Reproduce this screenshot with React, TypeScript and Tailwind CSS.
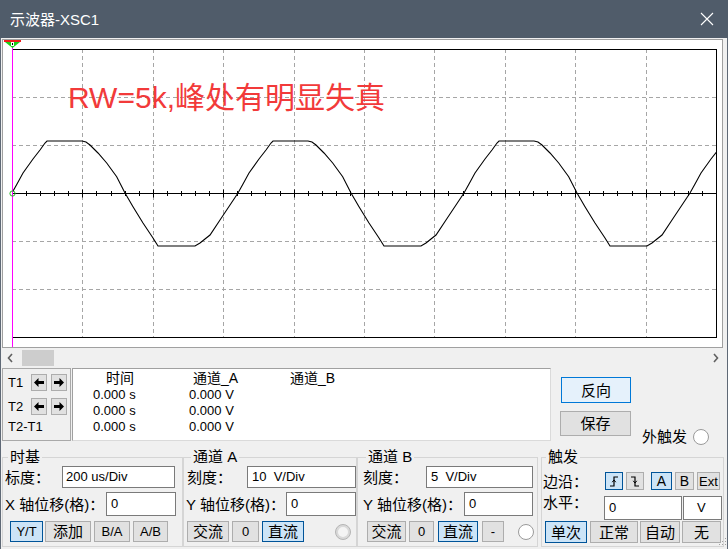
import React from "react";

function Btn({ cls, sel, children }: { cls: string; sel?: boolean; children: React.ReactNode }) {
  return (
    <div
      className={`flex items-center justify-center border text-black leading-none ${
        sel ? "bg-[#cce4f7] border-[#005499]" : "bg-[#e1e1e1] border-[#adadad]"
      } ${cls}`}
    >
      {children}
    </div>
  );
}

function Field({ cls, children }: { cls: string; children: React.ReactNode }) {
  return (
    <div
      className={`flex items-center bg-white border border-[#7a7a7a] text-[13px] text-black whitespace-pre ${cls}`}
    >
      {children}
    </div>
  );
}

function ArrowIcon({ dir }: { dir: "l" | "r" }) {
  return (
    <svg width="10" height="9" viewBox="0 0 10 9">
      {dir === "l" ? (
        <polygon points="0,4.5 4.5,0 4.5,3 10,3 10,6 4.5,6 4.5,9" fill="#000" />
      ) : (
        <polygon points="10,4.5 5.5,0 5.5,3 0,3 0,6 5.5,6 5.5,9" fill="#000" />
      )}
    </svg>
  );
}

function EdgeIcon({ rising }: { rising: boolean }) {
  return (
    <svg width="10" height="11" viewBox="0 0 10 11">
      {rising ? (
        <>
          <path d="M1 10 H5 V1 H9" stroke="#000" strokeWidth="1.2" fill="none" />
          <path d="M3.2 6.2 L5 4 L6.8 6.2" stroke="#000" strokeWidth="1" fill="none" />
        </>
      ) : (
        <>
          <path d="M1 1 H5 V10 H9" stroke="#000" strokeWidth="1.2" fill="none" />
          <path d="M3.2 4.8 L5 7 L6.8 4.8" stroke="#000" strokeWidth="1" fill="none" />
        </>
      )}
    </svg>
  );
}

const BASE: [number, number][] = [
  [0, 0], [5, 9], [11, 20], [21, 34], [28, 43], [33, 50], [35, 52],
  [70, 52], [74, 51], [78, 48], [86, 40], [94.7, 30], [104.7, 16.3], [113, 0],
  [121, -13.7], [131, -30], [141, -45], [146, -53],
  [183, -53], [188, -50], [198, -42], [208, -27], [218, -12], [226, 0],
];

function ScopeChart() {
  const X0 = 12, X1 = 716, Y0 = 49, Y1 = 337, CY = 193;
  const DX = 70.4;
  const verts = [1, 2, 3, 4, 5, 6, 7, 8, 9].map((i) => Math.round(X0 + DX * i) + 0.5);
  const hors = [97, 145, 241, 289];
  const pts: string[] = [];
  for (let k = 0; k < 4; k++) {
    BASE.forEach((p, idx) => {
      if (k > 0 && idx === 0) return;
      pts.push(`${(X0 + k * 226 + p[0]).toFixed(1)},${(CY - p[1]).toFixed(1)}`);
    });
  }
  const ticks: { x: number; major: boolean }[] = [];
  for (let i = 0; i <= 50; i++) ticks.push({ x: Math.round(X0 + 14.08 * i) + 0.5, major: i % 5 === 0 });
  return (
    <svg width="719" height="307" viewBox="3 40 719 307" className="block">
      <defs>
        <clipPath id="plot">
          <rect x="12" y="40" width="704.5" height="300" />
        </clipPath>
      </defs>
      {verts.map((x, i) => (
        <line key={"v" + i} x1={x} y1={Y0} x2={x} y2={Y1} stroke="#a6a6a6" strokeWidth="1" strokeDasharray="4 3" />
      ))}
      {hors.map((y, i) => (
        <line key={"h" + i} x1={X0} y1={y + 0.5} x2={X1} y2={y + 0.5} stroke="#a6a6a6" strokeWidth="1" strokeDasharray="4 3" />
      ))}
      <rect x={X0 + 0.5} y={Y0 + 0.5} width={X1 - X0} height={Y1 - Y0} fill="none" stroke="#000" strokeWidth="1" />
      <line x1={X0} y1={CY + 0.5} x2={X1} y2={CY + 0.5} stroke="#000" strokeWidth="1.2" />
      {ticks.map((t, i) => (
        <line key={"t" + i} x1={t.x} y1={t.major ? CY - 3.5 : CY - 2} x2={t.x} y2={t.major ? CY + 4.5 : CY + 3} stroke="#000" strokeWidth="1" />
      ))}
      <path d={"M" + pts.join(" L")} fill="none" stroke="#000" strokeWidth="1.1" clipPath="url(#plot)" />
      <line x1="12.5" y1="46" x2="12.5" y2="347" stroke="#ff00ff" strokeWidth="1" />
      <circle cx="12.5" cy="193.5" r="2.6" fill="none" stroke="#22bb22" strokeWidth="1" />
      <rect x="4" y="40" width="17" height="2" fill="#ee1c1c" />
      <polygon points="5,42 20,42 12.5,48" fill="#19d119" />
      <rect x="11" y="42" width="3" height="4" fill="#ffffff" />
      <rect x="12" y="43" width="1" height="2" fill="#000" />
    </svg>
  );
}

export default function App() {
  return (
    <div className="relative w-[728px] h-[549px] overflow-hidden bg-[#f0f0f0] flex flex-col text-black font-['Liberation_Sans','Noto_Sans_CJK_SC',sans-serif]">
      {/* Title bar */}
      <div className="h-[38px] shrink-0 bg-[#505c6a] flex items-center justify-between pl-[10px] pr-[14px]">
        <span className="text-white text-[15px] leading-none">示波器-XSC1</span>
        <svg width="14" height="14" viewBox="0 0 14 14">
          <path d="M1 1 L13 13 M13 1 L1 13" stroke="#ffffff" strokeWidth="1.1" fill="none" />
        </svg>
      </div>

      <div className="flex-1 flex flex-col border-l border-r border-[#5f6976] pt-[1px]">
        {/* Scope display */}
        <div className="relative ml-[1px] w-[721px] h-[309px] border border-[#a0a0a0] bg-white">
          <ScopeChart />
          <div className="absolute left-[65px] top-[43px] text-[30px] leading-[30px] text-[#f23a3a] whitespace-nowrap">
            RW=5k,峰处有明显失真
          </div>
        </div>

        {/* Scrollbar */}
        <div className="h-[19px] flex items-center">
          <svg width="6" height="10" viewBox="0 0 6 10" className="ml-[6px]">
            <polyline points="5,1 1.5,5 5,9" fill="none" stroke="#606060" strokeWidth="1.6" />
          </svg>
          <div className="ml-[9px] w-[32px] h-[16px] bg-[#cdcdcd]" />
          <div className="flex-1" />
          <svg width="6" height="10" viewBox="0 0 6 10" className="mr-[8px]">
            <polyline points="1,1 4.5,5 1,9" fill="none" stroke="#606060" strokeWidth="1.6" />
          </svg>
        </div>

        {/* Cursor panel */}
        <div className="h-[75px] flex items-start">
          <div className="ml-[1px] mt-[1px] w-[69px] h-[73px] border border-[#a9a9a9] flex flex-col pl-[5px] pt-[5px] text-[13px]">
            <div className="h-[17px] flex items-center">
              <span className="w-[23px] leading-none">T1</span>
              <Btn cls="w-[16px] h-[17px]"><ArrowIcon dir="l" /></Btn>
              <Btn cls="ml-[4px] w-[16px] h-[17px]"><ArrowIcon dir="r" /></Btn>
            </div>
            <div className="mt-[7px] h-[17px] flex items-center">
              <span className="w-[23px] leading-none">T2</span>
              <Btn cls="w-[16px] h-[17px]"><ArrowIcon dir="l" /></Btn>
              <Btn cls="ml-[4px] w-[16px] h-[17px]"><ArrowIcon dir="r" /></Btn>
            </div>
            <div className="mt-[4px] leading-[16px]">T2-T1</div>
          </div>

          <div className="ml-[1px] mt-[1px] w-[479px] h-[73px] bg-white border border-t-[#a0a0a0] border-l-[#a0a0a0] border-r-[#dadada] border-b-[#dadada] pt-[1px] text-black">
            <div className="h-[16px] flex items-center text-[14px] leading-none">
              <div className="w-[120px] pl-[33px]">时间</div>
              <div className="w-[97px]">通道_A</div>
              <div>通道_B</div>
            </div>
            {[0, 1, 2].map((r) => (
              <div key={r} className="h-[16px] flex items-center text-[13px] leading-none">
                <div className="w-[116px] pl-[20px]">0.000 s</div>
                <div>0.000 V</div>
              </div>
            ))}
          </div>

          <div className="ml-[9px] w-[71px] flex flex-col text-[15px]">
            <div className="mt-[10px] ml-[1px] w-[70px] h-[26px] flex items-center justify-center border border-[#0078d7] bg-[#e5f1fb] leading-none">
              反向
            </div>
            <div className="mt-[8px] w-[71px] h-[25px] flex items-center justify-center border border-[#adadad] bg-[#e1e1e1] leading-none">
              保存
            </div>
          </div>

          <div className="ml-[11px] pt-[62px] flex items-center">
            <span className="text-[15px] leading-[16px]">外触发</span>
            <div className="ml-[6px] w-[16px] h-[16px] rounded-full border border-[#9a9a9a] bg-white" />
          </div>
        </div>

        {/* Bottom control groups */}
        <div className="h-[107px] flex items-start pt-[6px]">
          {/* 时基 */}
          <fieldset className="ml-[1px] w-[181px] h-[99px] border border-[#d5d5d5] m-0 p-0 min-w-0">
            <legend className="ml-[5px] px-[2px] text-[15px] leading-[18px]">时基</legend>
            <div className="h-[22px] flex items-center">
              <span className="w-[59px] pl-[2px] text-[15px] leading-none whitespace-nowrap">标度：</span>
              <Field cls="w-[113px] h-[22px] pl-[3px]">200 us/Div</Field>
            </div>
            <div className="mt-[4px] h-[24px] flex items-center">
              <span className="w-[103px] pl-[2px] text-[15px] leading-none whitespace-nowrap">X 轴位移(格)：</span>
              <Field cls="w-[70px] h-[24px] pl-[4px]">0</Field>
            </div>
            <div className="mt-[5px] h-[21px] flex">
              <Btn sel cls="ml-[7px] w-[33px] h-[21px] text-[13px]">Y/T</Btn>
              <Btn cls="ml-[2px] w-[46px] h-[21px] text-[15px]">添加</Btn>
              <Btn cls="ml-[3px] w-[36px] h-[21px] text-[13px]">B/A</Btn>
              <Btn cls="ml-[3px] w-[35px] h-[21px] text-[13px]">A/B</Btn>
            </div>
          </fieldset>

          {/* 通道 A */}
          <fieldset className="w-[174px] h-[99px] border border-[#d5d5d5] m-0 p-0 min-w-0">
            <legend className="ml-[7px] px-[2px] text-[15px] leading-[18px]">通道 A</legend>
            <div className="h-[22px] flex items-center">
              <span className="w-[63px] pl-[3px] text-[15px] leading-none whitespace-nowrap">刻度：</span>
              <Field cls="w-[109px] h-[22px] pl-[4px]">10  V/Div</Field>
            </div>
            <div className="mt-[4px] h-[24px] flex items-center">
              <span className="w-[102px] pl-[2px] text-[15px] leading-none whitespace-nowrap">Y 轴位移(格)：</span>
              <Field cls="w-[70px] h-[24px] pl-[4px]">0</Field>
            </div>
            <div className="mt-[5px] h-[21px] flex items-center">
              <Btn cls="ml-[3px] w-[42px] h-[21px] text-[15px]">交流</Btn>
              <Btn cls="ml-[3px] w-[27px] h-[21px] text-[13px]">0</Btn>
              <Btn sel cls="ml-[3px] w-[42px] h-[21px] text-[15px]">直流</Btn>
              <div className="ml-[31px] w-[16px] h-[16px] rounded-full border border-[#b5b5b5] bg-[#d9d9d9] flex items-center justify-center">
                <div className="w-[10px] h-[10px] rounded-full bg-[#f4f4f4]" />
              </div>
            </div>
          </fieldset>

          {/* 通道 B */}
          <fieldset className="w-[181px] h-[99px] border border-[#d5d5d5] m-0 p-0 min-w-0">
            <legend className="ml-[8px] px-[2px] text-[15px] leading-[18px]">通道 B</legend>
            <div className="h-[22px] flex items-center">
              <span className="w-[68px] pl-[5px] text-[15px] leading-none whitespace-nowrap">刻度：</span>
              <Field cls="w-[107px] h-[22px] pl-[4px]">5  V/Div</Field>
            </div>
            <div className="mt-[4px] h-[24px] flex items-center">
              <span className="w-[106px] pl-[5px] text-[15px] leading-none whitespace-nowrap">Y 轴位移(格)：</span>
              <Field cls="w-[69px] h-[24px] pl-[4px]">0</Field>
            </div>
            <div className="mt-[5px] h-[21px] flex items-center">
              <Btn cls="ml-[9px] w-[39px] h-[21px] text-[15px]">交流</Btn>
              <Btn cls="ml-[3px] w-[25px] h-[21px] text-[13px]">0</Btn>
              <Btn sel cls="ml-[4px] w-[40px] h-[21px] text-[15px]">直流</Btn>
              <Btn cls="ml-[4px] w-[22px] h-[21px] text-[13px]">-</Btn>
              <div className="ml-[14px] w-[16px] h-[16px] rounded-full border border-[#9a9a9a] bg-white" />
            </div>
          </fieldset>

          {/* 触发 */}
          <fieldset className="ml-[3px] w-[183px] h-[99px] border border-[#d5d5d5] m-0 p-0 min-w-0">
            <legend className="ml-[4px] px-[2px] text-[15px] leading-[18px]">触发</legend>
            <div className="mt-[6px] h-[18px] flex items-center">
              <span className="w-[63px] pl-[1px] text-[15px] leading-none whitespace-nowrap">边沿：</span>
              <Btn sel cls="w-[18px] h-[18px]"><EdgeIcon rising /></Btn>
              <Btn cls="ml-[3px] w-[18px] h-[18px]"><EdgeIcon rising={false} /></Btn>
              <Btn sel cls="ml-[7px] w-[21px] h-[18px] text-[14px]">A</Btn>
              <Btn cls="ml-[3px] w-[19px] h-[18px] text-[14px]">B</Btn>
              <Btn cls="ml-[3px] w-[23px] h-[18px] text-[13px]">Ext</Btn>
            </div>
            <div className="mt-[6px] h-[24px] flex items-center">
              <span className="w-[62px] pl-[1px] self-start leading-[14px] text-[15px] whitespace-nowrap">水平：</span>
              <Field cls="w-[78px] h-[24px] pl-[4px]">0</Field>
              <Field cls="ml-[1px] w-[39px] h-[24px] pl-[13px]">V</Field>
            </div>
            <div className="mt-[1px] h-[22px] flex">
              <Btn sel cls="ml-[3px] w-[42px] h-[22px] text-[15px]">单次</Btn>
              <Btn cls="ml-[3px] w-[48px] h-[22px] text-[15px]">正常</Btn>
              <Btn cls="ml-[2px] w-[40px] h-[22px] text-[15px]">自动</Btn>
              <Btn cls="ml-[2px] w-[39px] h-[22px] text-[15px]">无</Btn>
            </div>
          </fieldset>
        </div>
      </div>

      {/* size grip */}
      <svg width="8" height="10" viewBox="0 0 8 10" className="absolute right-[1px] bottom-[1px]">
        <rect x="6" y="0" width="1" height="1" fill="#a0a0a0" />
        <rect x="6" y="3" width="1" height="1" fill="#a0a0a0" />
        <rect x="3" y="3" width="1" height="1" fill="#a0a0a0" />
        <rect x="6" y="6" width="1" height="1" fill="#a0a0a0" />
        <rect x="3" y="6" width="1" height="1" fill="#a0a0a0" />
        <rect x="0" y="6" width="1" height="1" fill="#a0a0a0" />
      </svg>
    </div>
  );
}
